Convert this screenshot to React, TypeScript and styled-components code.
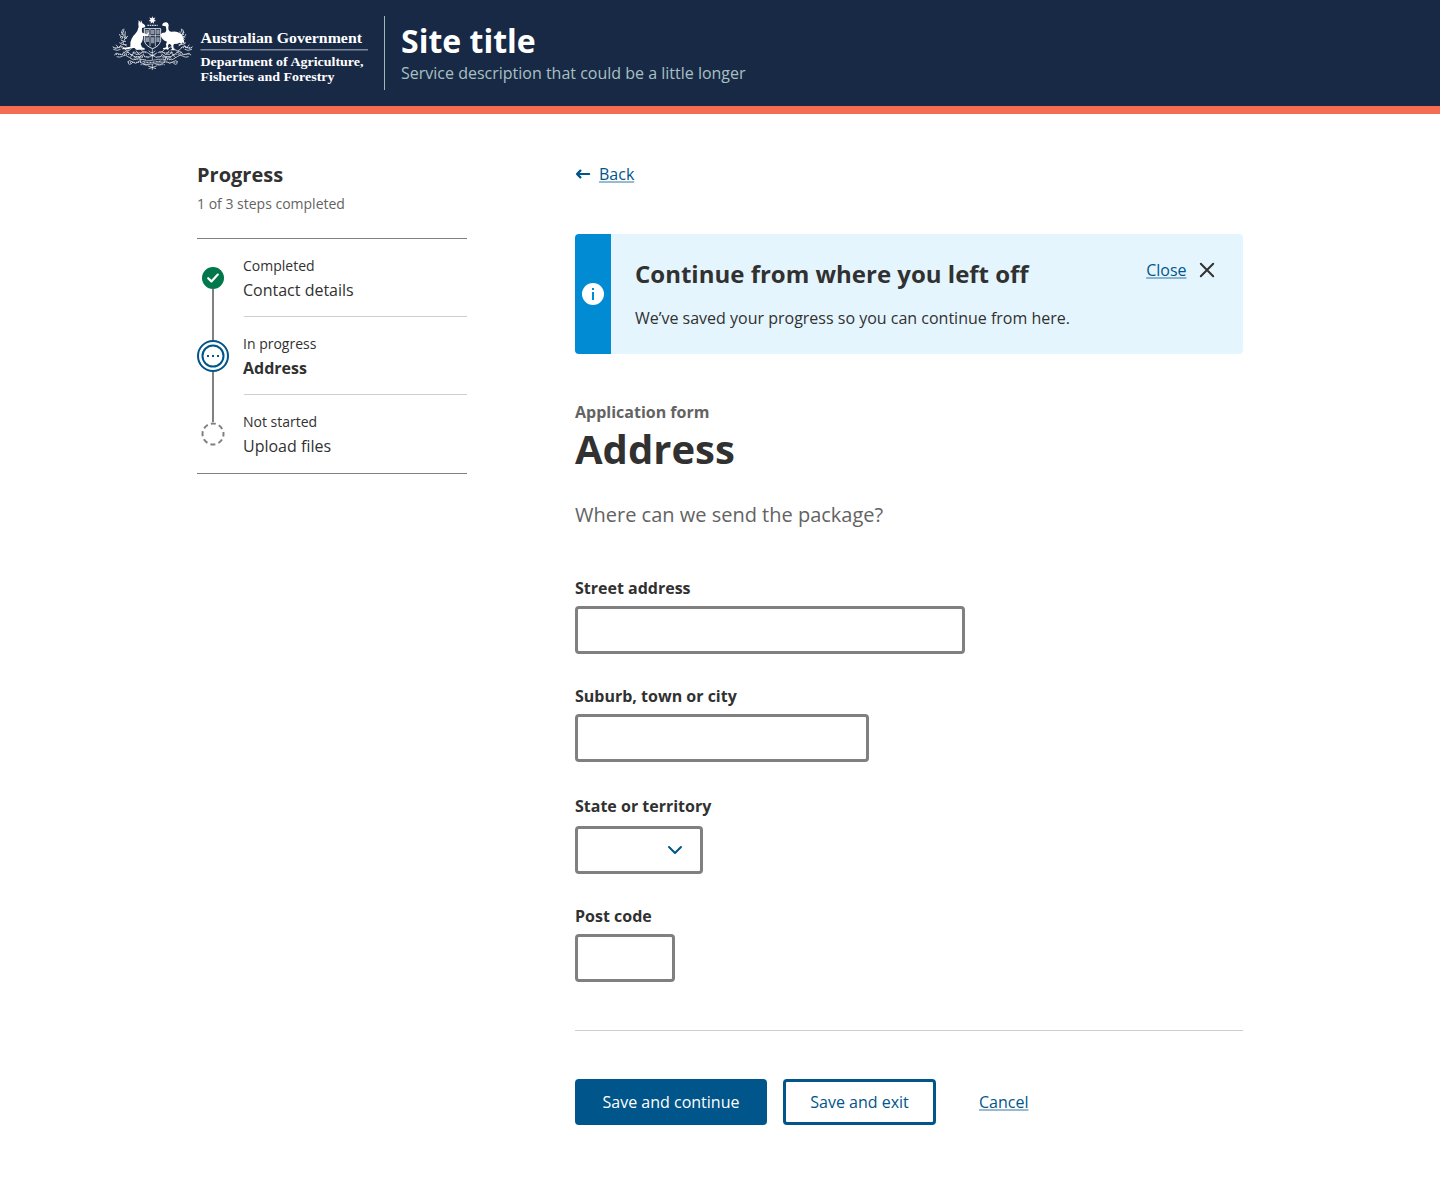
import React from "react";
import styled, { createGlobalStyle } from "styled-components";

const GlobalStyle = createGlobalStyle`
  * { box-sizing: border-box; }
  body {
    margin: 0;
    background: #fff;
    color: #313131;
    font-family: "Open Sans", "Noto Sans", sans-serif;
    font-size: 16px;
    line-height: 24px;
  }
  h1, h2, p, ol { margin: 0; padding: 0; }
`;

const Header = styled.header`
  height: 114px;
  padding: 16px 112px;
  display: flex;
  align-items: flex-start;
  background: #182946;
  border-bottom: 8px solid #f46d51;
`;

const Brand = styled.div`
  height: 74px;
  margin-left: 16px;
  padding-left: 16px;
  border-left: 1px solid #9bbab8;
`;

const SiteTitle = styled.div`
  margin-top: 3px;
  font-size: 32px;
  line-height: 44px;
  font-weight: 700;
  color: #fff;
`;

const SiteDescription = styled.div`
  margin-top: -2px;
  color: #a8c0c1;
`;

const Page = styled.div`
  display: grid;
  grid-template-columns: 270px 668px;
  column-gap: 108px;
  align-items: start;
  padding: 48px 197px 64px;
`;

const ProgressTitle = styled.h2`
  font-size: 20px;
  line-height: 26px;
  font-weight: 700;
`;

const ProgressCount = styled.p`
  margin-top: 5px;
  font-size: 14px;
  line-height: 21px;
  color: #636363;
`;

const Steps = styled.ol`
  margin-top: 24px;
  list-style: none;
  border-top: 1px solid #808080;
  border-bottom: 1px solid #808080;
`;

const Step = styled.li`
  display: flex;
  height: 78px;
`;

const StepTrack = styled.div`
  width: 32px;
  margin-right: 15px;
  display: flex;
  flex-direction: column;
  align-items: center;
  svg { display: block; flex: none; }
`;

const Connector = styled.div<{ $visible: boolean }>`
  flex: 1;
  width: 2px;
  background: ${(p) => (p.$visible ? "#808080" : "transparent")};
`;

const StepBody = styled.div<{ $last: boolean }>`
  flex: 1;
  padding-top: 16px;
  border-bottom: 1px solid ${(p) => (p.$last ? "transparent" : "#cfcfcf")};
`;

const StepStatus = styled.div`
  margin-left: -1px;
  font-size: 14px;
  line-height: 21px;
`;

const StepName = styled.div<{ $current: boolean }>`
  margin: 2px 0 0 -1px;
  font-weight: ${(p) => (p.$current ? 700 : 400)};
`;

const Link = styled.a`
  color: #00558b;
  text-decoration: underline;
  text-decoration-color: rgba(0, 85, 139, 0.4);
  text-decoration-thickness: 2px;
  text-underline-offset: 1px;
  text-decoration-skip-ink: none;
`;

const BackRow = styled.div`
  display: flex;
  align-items: center;
  gap: 8px;
`;

const Alert = styled.section`
  display: flex;
  height: 120px;
  margin-top: 48px;
  border-radius: 4px;
  overflow: hidden;
  background: #e5f5fe;
`;

const AlertIcon = styled.div`
  width: 36px;
  display: flex;
  align-items: center;
  justify-content: center;
  background: #008bd3;
`;

const AlertBody = styled.div`
  flex: 1;
  padding: 24px;
`;

const AlertTitle = styled.h2`
  margin-bottom: 16px;
  font-size: 24px;
  line-height: 32px;
  font-weight: 700;
`;

const AlertClose = styled.div`
  display: flex;
  align-items: center;
  gap: 12.5px;
  height: 24px;
  margin: 24px 28px 0 0;
`;

const FormName = styled.div`
  margin-top: 46px;
  font-weight: 700;
  color: #636363;
`;

const PageTitle = styled.h1`
  font-size: 40px;
  line-height: 50px;
  font-weight: 700;
`;

const Intro = styled.p`
  margin-top: 26px;
  font-size: 20px;
  line-height: 30px;
  color: #636363;
`;

const Fields = styled.div`
  margin-top: 46px;
  display: flex;
  flex-direction: column;
`;

const Field = styled.label<{ $gap?: number; $before?: number }>`
  display: flex;
  flex-direction: column;
  gap: ${(p) => p.$gap ?? 6}px;
  margin-top: ${(p) => p.$before ?? 0}px;
  font-weight: 700;
`;

const TextInput = styled.input<{ $width: number }>`
  width: ${(p) => p.$width}px;
  height: 48px;
  padding: 0 13px;
  border: 3px solid #808080;
  border-radius: 4px;
  background: #fff;
  font: inherit;
  outline: none;
`;

const SelectBox = styled.div`
  width: 128px;
  height: 48px;
  padding-right: 17px;
  display: flex;
  align-items: center;
  justify-content: flex-end;
  border: 3px solid #808080;
  border-radius: 4px;
  background: #fff;
`;

const Divider = styled.hr`
  height: 1px;
  margin: 48px 0;
  border: 0;
  background: #cfcfcf;
`;

const Actions = styled.div`
  display: flex;
  align-items: center;
`;

const Button = styled.button<{ $primary?: boolean; $width: number }>`
  width: ${(p) => p.$width}px;
  height: 46px;
  margin-right: 16px;
  padding: 0;
  border: 3px solid #00558b;
  border-radius: 4px;
  background: ${(p) => (p.$primary ? "#00558b" : "#fff")};
  color: ${(p) => (p.$primary ? "#fff" : "#00558b")};
  font: inherit;
`;

const CancelSlot = styled.div`
  margin-left: 27px;
`;

/* Wattle sprigs are laid out on the left and mirrored around the shield. */
function Wattle() {
  return (
    <g stroke="#fff" fill="none" strokeWidth="2.6" opacity="0.82">
      <path d="M14 110q8 10 18 2t18 4t20 0t20 4M16 118q12 6 22 0M24 104l8 10l8-10M44 58q-8 10 2 18t2 16t8 16M34 72q2 10 12 10M38 88q6 10 16 6M34 98q10 8 22 6M52 64q-4 12 4 22M60 78l-10 10M40 66l10 10M48 56l-2 12" />
      <path d="M20 136q2-10 12-4t16-4t16 2t14-6M26 140q10 4 18-2t16 2t12-8M46 126q6 8 16 0M58 156q6-8 16 0t16 0t12 4M60 160q4 6 12 0M66 144q10 10 22 2t16-4M70 134q12 12 24 6t14-8M76 126q6 12 18 6M84 122l10 12l12-10M98 118q6 10 18 8M106 134q4 10 16 6M104 160q6 8 18 4M92 140l8 12M78 146l8-8" />
      <path strokeDasharray="3 3" strokeWidth="3" d="M16 113h34M36 82h20M42 66v34M24 133h52M60 157h40M74 128h44M78 140h38M98 164h28M82 149h32" />
    </g>
  );
}

function GovernmentLogo() {
  return (
    <svg width="256" height="74" viewBox="0 0 256 74" role="img" aria-label="Australian Government crest">
      <g transform="translate(-4 -6) scale(0.33333)">
        <Wattle />
        <g transform="translate(268 0) scale(-1 1)">
          <Wattle />
        </g>
        <path
          fill="#fff"
          d="M133 18l2 7 7-2.2-3.4 6.4 5.6 4-6.8 1 .6 7-5-4.6-5 4.6 .6-7-6.8-1 5.6-4-3.4-6.4 7 2.2z"
        />
        <path d="M118 46h31" stroke="#fff" strokeWidth="4" strokeDasharray="5 2" opacity=".8" />
        <path d="M109 56h49v36q-4 17-24 24q-21-7-25-24z" fill="#182946" stroke="#fff" strokeWidth="2.6" />
        <path d="M110 77h47M126 57v52M142 57v52" stroke="#fff" strokeWidth="2.4" opacity=".8" />
        <path
          d="M112 60h11v13h-11zM129 60h10v13h-10zM145 60h10v13h-10zM112 82h11v14h-11zM129 82h10v18h-10zM145 82h10v14h-10z"
          fill="#fff"
          opacity=".5"
        />
        <path
          fill="#fff"
          d="M92 30l6 8 1-8 4 10q6 2 9 8l-1 4-9 2q-1 8 1 14l14 5 4-6 2 2-3 10-15-1q1 10-3 17l-4 7 4 10 8 3v4H84l-4-5-10 0-8 4-20 0 2-4 23-4q-2-14 4-24 4-9 11-15 8-9 10-21-2-9 0-18z"
        />
        <path
          fill="#fff"
          d="M163 47q-1-8 9-10 9-1 10 9-2 8 0 14 2 6 10 5 14-3 24 5 10 7 11 19l3 12-6-5-4 6-5-4-7 3-10 1-2 5 1 10 7 4h-18l6-4-3-13-6-3-3 6 2 11h-17v-3l10-3-1-10 3-7q-10-3-14-9-7-6-5-13 5-6 13-5 5-4 4-10l-2-9z"
        />
        <path
          d="M98 147q18 8 35 4t35-4v11q-17 0-35 4t-35-4z"
          fill="#182946"
          stroke="#fff"
          strokeWidth="2"
          opacity=".85"
        />
        <path d="M104 154q15 5 29 3t30-4" stroke="#fff" strokeWidth="4" strokeDasharray="3 1.5" fill="none" opacity=".8" />
        <path
          d="M122 122q10 12 20 0M124 134q10 8 18 0M133 116v34M118 128l30 16M148 128l-30 16M120 168l24 8M146 168l-24 8M133 162v18"
          stroke="#fff"
          strokeWidth="2.4"
          fill="none"
          opacity=".8"
        />
      </g>
      <g fill="#fff" fontFamily='"Liberation Serif", "Times New Roman", serif' fontWeight="700">
        <text x="88.5" y="27" fontSize="14.4" textLength="161.5" lengthAdjust="spacingAndGlyphs">
          Australian Government
        </text>
        <text x="88.5" y="50" fontSize="12.9" textLength="163" lengthAdjust="spacingAndGlyphs">
          Department of Agriculture,
        </text>
        <text x="88.5" y="65.2" fontSize="12.9" textLength="134" lengthAdjust="spacingAndGlyphs">
          Fisheries and Forestry
        </text>
      </g>
      <path d="M88.5 33.7H256" stroke="#7f8a9c" strokeWidth="1.4" />
    </svg>
  );
}

type StepState = "done" | "doing" | "todo";

function StepIcon({ state }: { state: StepState }) {
  if (state === "done") {
    return (
      <svg width="22" height="22" viewBox="0 0 22 22">
        <circle cx="11" cy="11" r="11" fill="#00784b" />
        <path d="M6.2 11.2l3.2 3.2L15.8 7.6" fill="none" stroke="#fff" strokeWidth="2.2" strokeLinecap="round" strokeLinejoin="round" />
      </svg>
    );
  }
  if (state === "doing") {
    return (
      <svg width="32" height="32" viewBox="0 0 32 32">
        <g fill="none" stroke="#00558b" strokeWidth="2">
          <circle cx="16" cy="16" r="15" />
          <circle cx="16" cy="16" r="10.5" />
        </g>
        <path d="M10 15h2v2h-2zM15 15h2v2h-2zM20 15h2v2h-2z" fill="#00558b" />
      </svg>
    );
  }
  return (
    <svg width="24" height="24" viewBox="0 0 24 24">
      <circle
        cx="12"
        cy="12"
        r="10.5"
        fill="none"
        stroke="#808080"
        strokeWidth="2"
        strokeDasharray="5 3.247"
        strokeDashoffset="2.5"
      />
    </svg>
  );
}

const steps: { status: string; name: string; state: StepState }[] = [
  { status: "Completed", name: "Contact details", state: "done" },
  { status: "In progress", name: "Address", state: "doing" },
  { status: "Not started", name: "Upload files", state: "todo" },
];

export default function App() {
  return (
    <>
      <GlobalStyle />
      <Header>
        <GovernmentLogo />
        <Brand>
          <SiteTitle>Site title</SiteTitle>
          <SiteDescription>Service description that could be a little longer</SiteDescription>
        </Brand>
      </Header>
      <Page>
        <aside>
          <ProgressTitle>Progress</ProgressTitle>
          <ProgressCount>1 of 3 steps completed</ProgressCount>
          <Steps>
            {steps.map((step, i) => (
              <Step key={step.name}>
                <StepTrack>
                  <Connector $visible={i > 0} />
                  <StepIcon state={step.state} />
                  <Connector $visible={i < steps.length - 1} />
                </StepTrack>
                <StepBody $last={i === steps.length - 1}>
                  <StepStatus>{step.status}</StepStatus>
                  <StepName $current={step.state === "doing"}>{step.name}</StepName>
                </StepBody>
              </Step>
            ))}
          </Steps>
        </aside>
        <main>
          <BackRow>
            <svg width="16" height="16" viewBox="0 0 16 16">
              <path d="M14.2 8H2M5.4 4.6L2 8l3.4 3.4" fill="none" stroke="#00558b" strokeWidth="2.2" strokeLinecap="round" strokeLinejoin="round" />
            </svg>
            <Link>Back</Link>
          </BackRow>
          <Alert>
            <AlertIcon>
              <svg width="22" height="22" viewBox="0 0 22 22">
                <circle cx="11" cy="11" r="11" fill="#fff" />
                <path d="M10 5h2v2h-2zM10 9h2v8h-2z" fill="#008bd3" />
              </svg>
            </AlertIcon>
            <AlertBody>
              <AlertTitle>Continue from where you left off</AlertTitle>
              <p>We’ve saved your progress so you can continue from here.</p>
            </AlertBody>
            <AlertClose>
              <Link>Close</Link>
              <svg width="16" height="16" viewBox="0 0 16 16">
                <path d="M1.8 1.8l12.4 12.4M14.2 1.8L1.8 14.2" stroke="#313131" strokeWidth="2" strokeLinecap="round" />
              </svg>
            </AlertClose>
          </Alert>
          <FormName>Application form</FormName>
          <PageTitle>Address</PageTitle>
          <Intro>Where can we send the package?</Intro>
          <Fields>
            <Field>
              Street address
              <TextInput $width={390} />
            </Field>
            <Field $before={30}>
              Suburb, town or city
              <TextInput $width={294} />
            </Field>
            <Field as="div" $before={32} $gap={8}>
              State or territory
              <SelectBox>
                <svg width="16" height="16" viewBox="0 0 16 16">
                  <path d="M2 5l6 6 6-6" fill="none" stroke="#00558b" strokeWidth="2" strokeLinecap="round" strokeLinejoin="round" />
                </svg>
              </SelectBox>
            </Field>
            <Field $before={30}>
              Post code
              <TextInput $width={100} />
            </Field>
          </Fields>
          <Divider />
          <Actions>
            <Button $primary $width={192}>Save and continue</Button>
            <Button $width={153}>Save and exit</Button>
            <CancelSlot>
              <Link>Cancel</Link>
            </CancelSlot>
          </Actions>
        </main>
      </Page>
    </>
  );
}
